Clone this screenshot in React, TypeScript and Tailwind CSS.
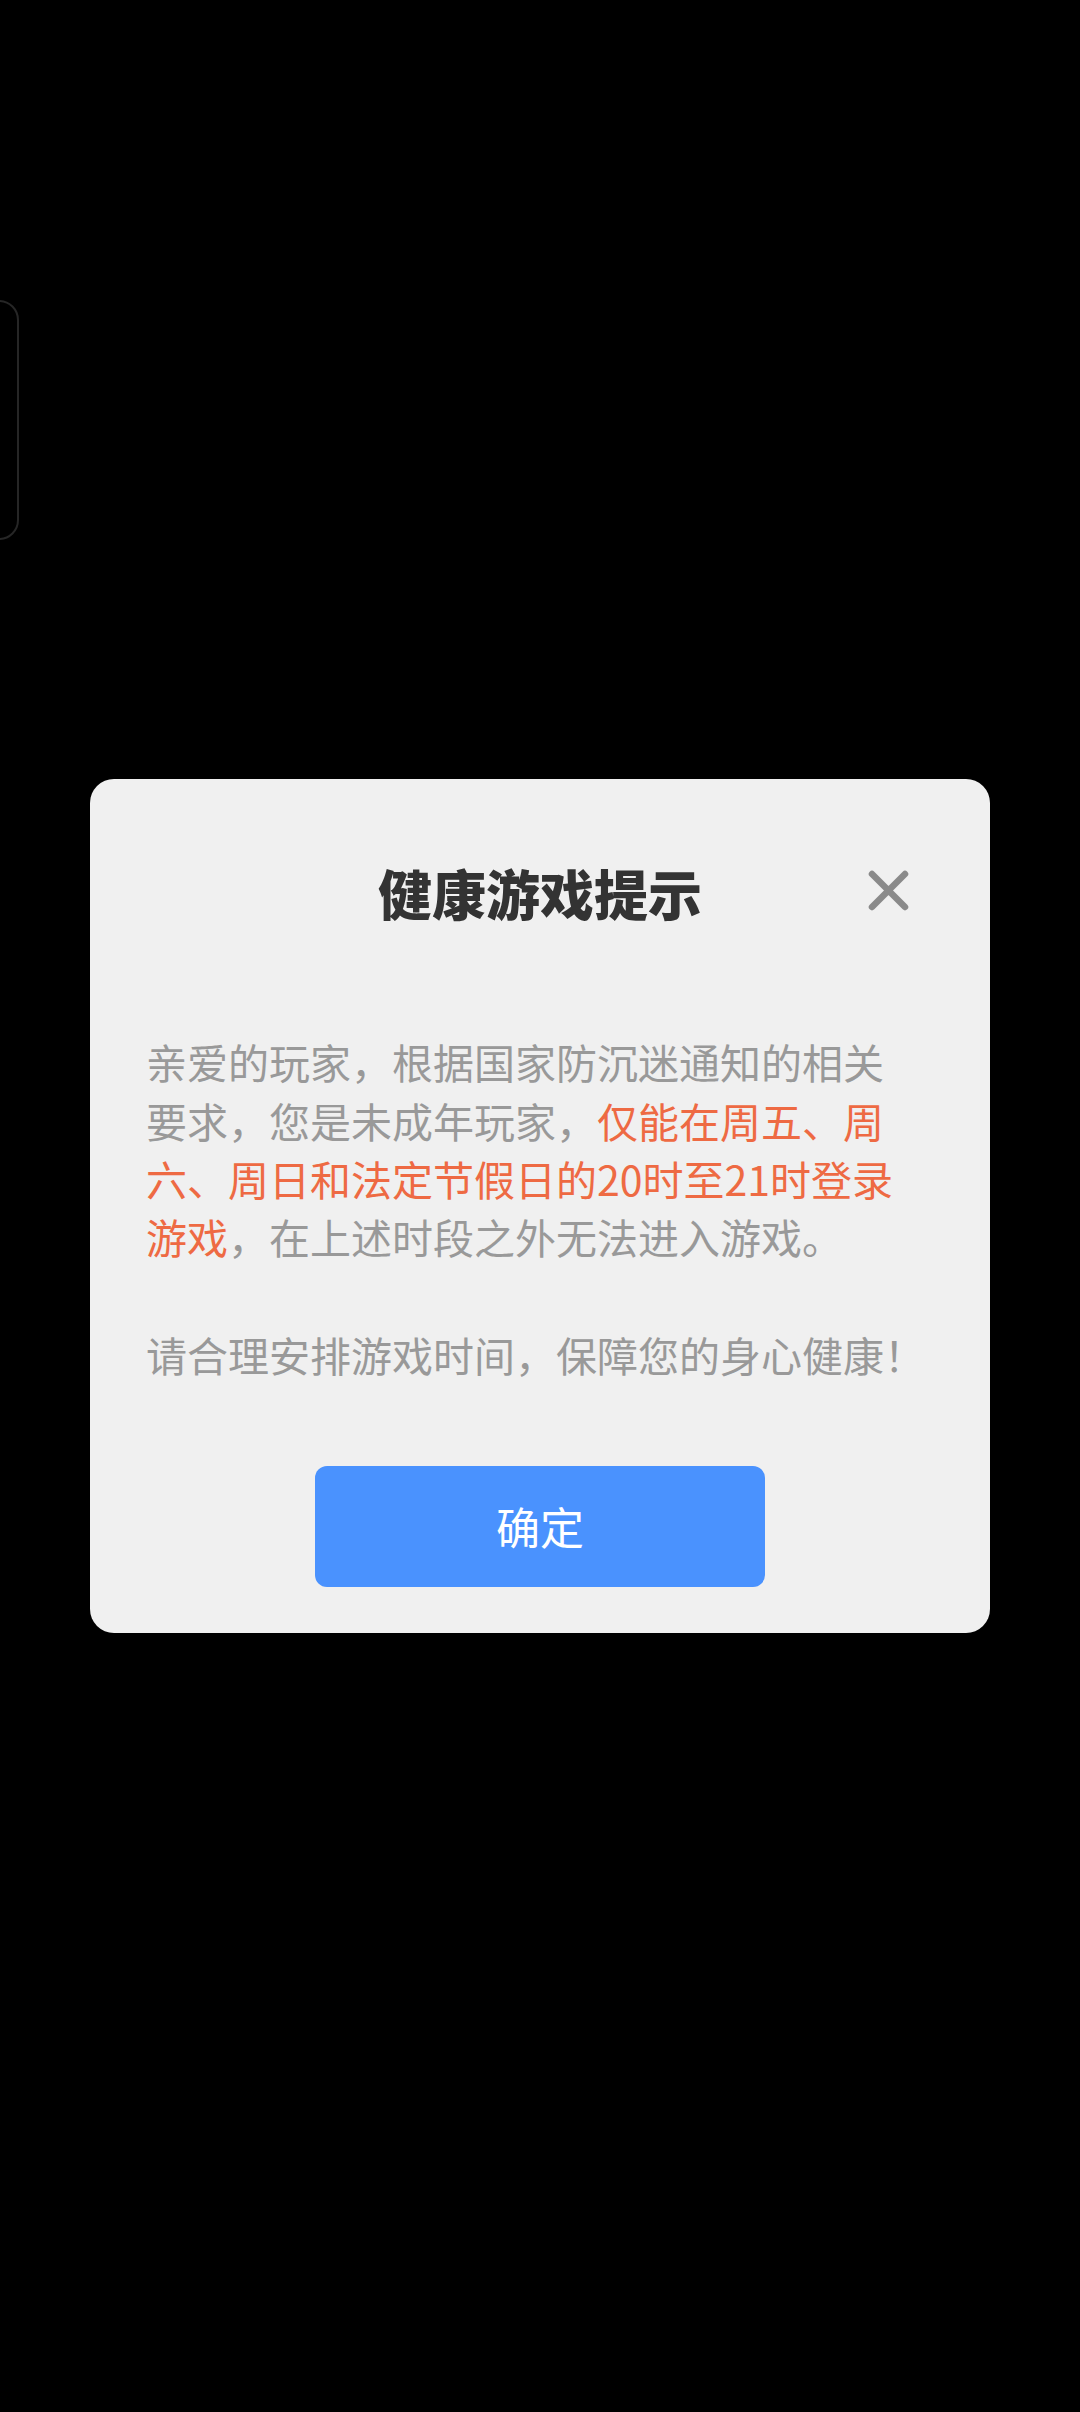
const font = { fontFamily: '"Noto Sans CJK SC", "Noto Sans", sans-serif' }

const CloseIcon = () => (
  <svg width="41" height="41" viewBox="0 0 41 41" fill="none">
    <path
      d="M4 4 L37 37 M37 4 L4 37"
      stroke="#8a8a8a"
      strokeWidth="6.5"
      strokeLinecap="round"
    />
  </svg>
)

const HealthDialog = () => {
  return (
    <div
      className="w-[900px] rounded-[24px] bg-[#f0f0f0] pt-[74px] pb-[46px] flex flex-col"
      style={font}
    >
      <div className="relative h-[80px] flex items-center justify-center">
        <h1 className="text-[54px] leading-[80px] font-black text-[#333333]">
          健康游戏提示
        </h1>
        <button className="absolute right-[81px] top-[17px] w-[41px] h-[41px] flex items-center justify-center">
          <CloseIcon />
        </button>
      </div>
      <div className="mt-[99px] pl-[56px] pr-[72px] text-[41px] leading-[58.3px] text-[#999999]">
        <p>
          亲爱的玩家，根据国家防沉迷通知的相关要求，您是未成年玩家，
          <span className="text-[#ee6a43]">
            仅能在周五、周六、周日和法定节假日的20时至21时登录游戏
          </span>
          ，在上述时段之外无法进入游戏。
        </p>
        <p className="mt-[60px] whitespace-nowrap">
          请合理安排游戏时间，保障您的身心健康
          <span className="[font-feature-settings:'halt']">！</span>
        </p>
      </div>
      <div className="mt-[82px] flex justify-center">
        <button className="w-[450px] h-[121px] rounded-[12px] bg-[#4a92fe] text-white text-[44px] leading-none">
          确定
        </button>
      </div>
    </div>
  )
}

const App = () => {
  return (
    <div className="relative w-[1080px] h-[2412px] bg-black overflow-hidden flex items-center justify-center">
      <div className="absolute left-[-22px] top-[300px] w-[41px] h-[240px] rounded-[20px] border-2 border-[#262626]" />
      <HealthDialog />
    </div>
  )
}

export default App
